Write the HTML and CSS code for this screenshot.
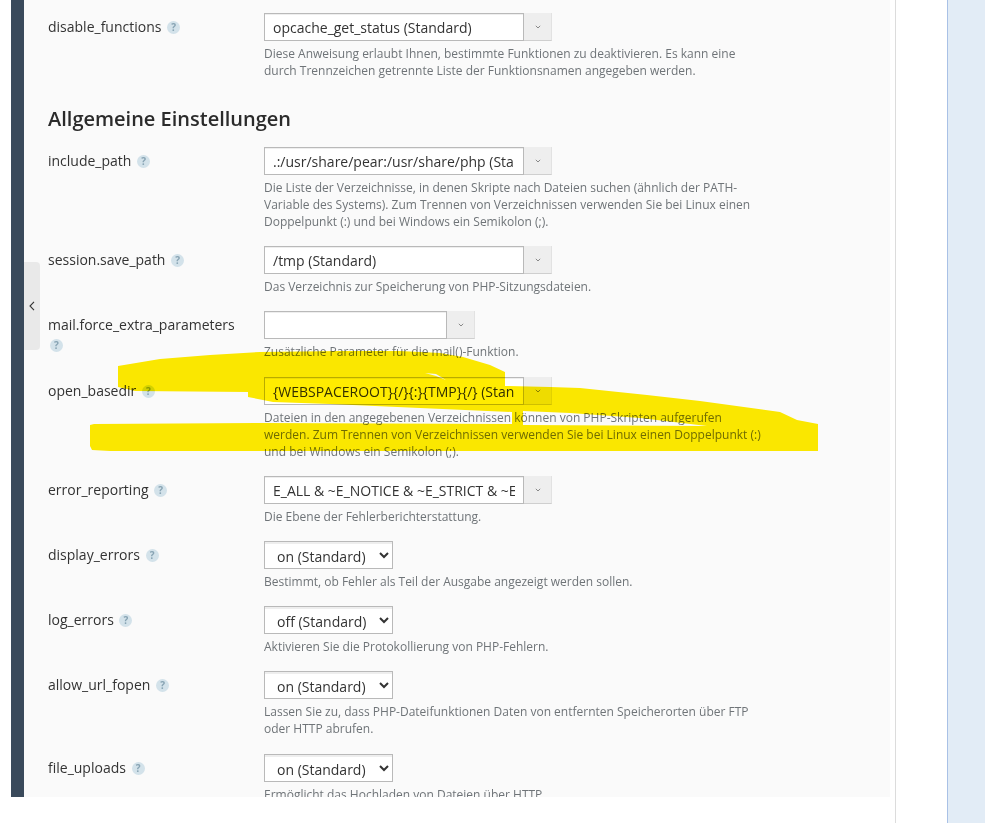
FILE: index.html
```html
<!DOCTYPE html>
<html lang="de">
<head>
<meta charset="utf-8">
<title>PHP-Einstellungen</title>
<link rel="stylesheet" href="styles.css">
</head>
<body>
<div class="app">
  <div class="rail"></div>
  <main class="panel">
    <button class="collapse" type="button" aria-label="Einklappen">
      <svg width="6" height="10" viewBox="0 0 6 10"><path d="M5 .8 1 5l4 4.200" fill="none" stroke="#333" stroke-width="1.100"/></svg>
    </button>

    <div class="row">
      <label class="name">disable_functions <span class="help">?</span></label>
      <div class="field">
        <div class="combo"><input class="combo-input" value="opcache_get_status (Standard)"><span class="combo-btn"><svg class="chev" width="6" height="4" viewBox="0 0 6 4"><path d="M.8.8 3 3 5.200.8" fill="none" stroke="#888" stroke-width="1"/></svg></span></div>
        <p class="hint">Diese Anweisung erlaubt Ihnen, bestimmte Funktionen zu deaktivieren. Es kann eine durch Trennzeichen getrennte Liste der Funktionsnamen angegeben werden.</p>
      </div>
    </div>

    <h2 class="section">Allgemeine Einstellungen</h2>

    <div class="row">
      <label class="name">include_path <span class="help">?</span></label>
      <div class="field">
        <div class="combo"><input class="combo-input" value=".:/usr/share/pear:/usr/share/php (Sta"><span class="combo-btn"><svg class="chev" width="6" height="4" viewBox="0 0 6 4"><path d="M.8.8 3 3 5.200.8" fill="none" stroke="#888" stroke-width="1"/></svg></span></div>
        <p class="hint">Die Liste der Verzeichnisse, in denen Skripte nach Dateien suchen (ähnlich der PATH-Variable des Systems). Zum Trennen von Verzeichnissen verwenden Sie bei Linux einen Doppelpunkt (:) und bei Windows ein Semikolon (;).</p>
      </div>
    </div>

    <div class="row">
      <label class="name">session.save_path <span class="help">?</span></label>
      <div class="field">
        <div class="combo"><input class="combo-input" value="/tmp (Standard)"><span class="combo-btn"><svg class="chev" width="6" height="4" viewBox="0 0 6 4"><path d="M.8.8 3 3 5.200.8" fill="none" stroke="#888" stroke-width="1"/></svg></span></div>
        <p class="hint">Das Verzeichnis zur Speicherung von PHP-Sitzungsdateien.</p>
      </div>
    </div>

    <div class="row">
      <label class="name">mail.force_extra_parameters <span class="help">?</span></label>
      <div class="field">
        <div class="combo combo-short"><input class="combo-input" value=""><span class="combo-btn"><svg class="chev" width="6" height="4" viewBox="0 0 6 4"><path d="M.8.8 3 3 5.200.8" fill="none" stroke="#888" stroke-width="1"/></svg></span></div>
        <p class="hint">Zusätzliche Parameter für die mail()-Funktion.</p>
      </div>
    </div>

    <div class="row">
      <label class="name">open_basedir <span class="help">?</span></label>
      <div class="field">
        <div class="combo"><input class="combo-input" value="{WEBSPACEROOT}{/}{:}{TMP}{/} (Stan"><span class="combo-btn"><svg class="chev" width="6" height="4" viewBox="0 0 6 4"><path d="M.8.8 3 3 5.200.8" fill="none" stroke="#888" stroke-width="1"/></svg></span></div>
        <p class="hint">Dateien in den angegebenen Verzeichnissen können von PHP-Skripten aufgerufen werden. Zum Trennen von Verzeichnissen verwenden Sie bei Linux einen Doppelpunkt (:) und bei Windows ein Semikolon (;).</p>
      </div>
    </div>

    <div class="row">
      <label class="name">error_reporting <span class="help">?</span></label>
      <div class="field">
        <div class="combo"><input class="combo-input" value="E_ALL &amp; ~E_NOTICE &amp; ~E_STRICT &amp; ~E"><span class="combo-btn"><svg class="chev" width="6" height="4" viewBox="0 0 6 4"><path d="M.8.8 3 3 5.200.8" fill="none" stroke="#888" stroke-width="1"/></svg></span></div>
        <p class="hint">Die Ebene der Fehlerberichterstattung.</p>
      </div>
    </div>

    <div class="row">
      <label class="name">display_errors <span class="help">?</span></label>
      <div class="field">
        <select class="native"><option>on (Standard)</option><option>off</option></select>
        <p class="hint">Bestimmt, ob Fehler als Teil der Ausgabe angezeigt werden sollen.</p>
      </div>
    </div>

    <div class="row">
      <label class="name">log_errors <span class="help">?</span></label>
      <div class="field">
        <select class="native"><option>off (Standard)</option><option>on</option></select>
        <p class="hint">Aktivieren Sie die Protokollierung von PHP-Fehlern.</p>
      </div>
    </div>

    <div class="row row-loose">
      <label class="name">allow_url_fopen <span class="help">?</span></label>
      <div class="field">
        <select class="native"><option>on (Standard)</option><option>off</option></select>
        <p class="hint">Lassen Sie zu, dass PHP-Dateifunktionen Daten von entfernten Speicherorten über FTP oder HTTP abrufen.</p>
      </div>
    </div>

    <div class="row">
      <label class="name">file_uploads <span class="help">?</span></label>
      <div class="field">
        <select class="native"><option>on (Standard)</option><option>off</option></select>
        <p class="hint">Ermöglicht das Hochladen von Dateien über HTTP.</p>
      </div>
    </div>
  </main>
  <div class="gutter"></div>
  <aside class="side"></aside>
</div>

<svg class="marker" width="985" height="823" viewBox="0 0 985 823" aria-hidden="true">
  <path fill="#ffec00" d="M118 366 L160 359 L210 355 L260 352 L340 351 L400 351 L440 353 L463 357 L490 365 L505 372 L505 386 L550 387 L580 388 L647 395 L700 401 L780 412 L797 420 L818 424 L818 451 L700 451 L330 451 L110 451 L92 450 L90 446 L90 425 L94 424 L263 423 L512 424 L512 412 L420 408 L330 404 L273 402 L248 397 L248 392 L135 391 L118 387 Z M523 411 L523 425 L707 426 L640 418 L570 413 Z"/>
  <path fill="#fafafa" d="M425 373 L436 374 L446 380 L436 376 Z"/>
</svg>
</body>
</html>
```

FILE: styles.css
```css
* { box-sizing: border-box; }

html, body {
  margin: 0;
  height: 823px;
  overflow: hidden;
  background: #fff;
}

body {
  font-family: "Open Sans", "Liberation Sans", sans-serif;
  color: #333;
  position: relative;
}

.app {
  display: flex;
  height: 823px;
}

.rail {
  flex: none;
  width: 13px;
  height: 797px;
  margin-left: 11px;
  background: #3a4a5b;
}

.panel {
  position: relative;
  flex: none;
  width: 866px;
  height: 797px;
  padding: 13px 0 0 24px;
  background: #fafafa;
  overflow: hidden;
}

.collapse {
  position: absolute;
  left: 0;
  top: 262px;
  width: 16px;
  height: 88px;
  padding: 0;
  border: 0;
  border-radius: 0 4px 4px 0;
  background: #e9e9e9;
  display: flex;
  align-items: center;
  justify-content: center;
}

.row {
  display: grid;
  grid-template-columns: 216px 505px;
  margin-bottom: 16px;
}

.row-loose {
  margin-bottom: 17px;
}

.name {
  padding: 4px 16px 6px 0;
  font-size: 14px;
  line-height: 20px;
  color: #333;
}

.help {
  display: inline-block;
  width: 13px;
  height: 13px;
  margin-left: 2px;
  border-radius: 50%;
  background: #d3e2ea;
  color: #87a3b3;
  font-size: 10px;
  font-weight: 700;
  line-height: 13px;
  text-align: center;
  vertical-align: 1px;
}

.combo {
  display: flex;
  width: 288px;
  height: 28px;
}

.combo-short {
  width: 211px;
}

.combo-input {
  flex: 1;
  min-width: 0;
  height: 28px;
  padding: 0 8px;
  border: 1px solid #b9b9b9;
  border-radius: 0;
  background: #fff;
  box-shadow: inset 0 1px 0 #eee;
  color: #333;
  font: 14px "Open Sans", "Liberation Sans", sans-serif;
  outline: 0;
}

.combo-btn {
  flex: none;
  width: 28px;
  height: 28px;
  background: #eee;
  border-right: 1px solid #e2e2e2;
  border-bottom: 1px solid #cfcfcf;
  display: flex;
  align-items: center;
  justify-content: center;
}

.native {
  display: block;
  width: 129px;
  height: 28px;
  padding: 2px 0 0 8px;
  border: 1px solid #b9b9b9;
  border-radius: 0;
  background-color: #fff;
  box-shadow: inset 0 2px 0 #eee;
  color: #333;
  font: 14px "Open Sans", "Liberation Sans", sans-serif;
}

.hint {
  margin: 4px 0 0;
  font-size: 12px;
  line-height: 17px;
  color: #6f7478;
}

.section {
  margin: 28px 0 16px;
  font-size: 20px;
  line-height: 24px;
  font-weight: 600;
  color: #2b2b2b;
}

.gutter {
  flex: none;
  width: 52px;
  margin-left: 5px;
  border-left: 1px solid #dcdcdc;
  background: #fff;
}

.side {
  flex: 1;
  border-left: 1px solid #a9c1e6;
  background: #e2ecf6;
}

.marker {
  position: absolute;
  left: 0;
  top: 0;
  mix-blend-mode: multiply;
  pointer-events: none;
}
```
